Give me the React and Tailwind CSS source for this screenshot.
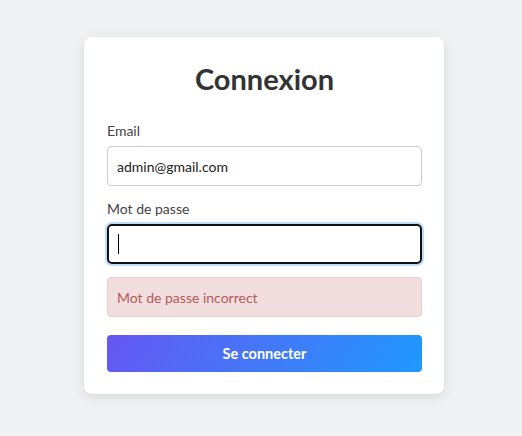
import React from 'react';

export default function App() {
  return (
    <div
      className="min-h-screen bg-[#f0f1f3] flex justify-center pt-[37px] pl-[6px]"
      style={{ fontFamily: 'Lato, "Noto Sans", sans-serif' }}
    >
      <div className="w-[360px] h-fit bg-white rounded-lg shadow-[0_3px_12px_rgba(0,0,0,0.1)] pl-[23px] pr-[22px] pt-[24px] pb-[22px]">
        <h1 className="text-center text-[29px] leading-[36px] font-bold text-[#333] mb-[24px]">Connexion</h1>

        {/* Email */}
        <div className="mb-[13px]">
          <label className="block text-[14px] leading-[20px] text-[#444] mb-[5px]">Email</label>
          <div className="h-[40px] border border-[#ccc] rounded-[4px] px-[9px] flex items-center text-[14px] text-[#222]">
            admin@gmail.com
          </div>
        </div>

        {/* Password */}
        <div className="mb-[13px]">
          <label className="block text-[14px] leading-[20px] text-[#444] mb-[5px]">Mot de passe</label>
          <div className="h-[40px] border-2 border-[#111] rounded-[5px] px-[9px] flex items-center shadow-[0_0_0_2px_#bcdcfb]">
            <span className="w-px h-[20px] bg-black" />
          </div>
        </div>

        {/* Error */}
        <div className="h-[40px] bg-[#f2dede] border border-[#ebccd1] rounded-[4px] px-[9px] flex items-center text-[14px] text-[#b35a58] mb-[18px]">
          Mot de passe incorrect
        </div>

        <button className="w-full h-[37px] rounded-[4px] bg-linear-[120deg] from-[#6657f2] to-[#1f99fe] text-white text-[14.5px] font-bold">
          Se connecter
        </button>
      </div>
    </div>
  );
}
